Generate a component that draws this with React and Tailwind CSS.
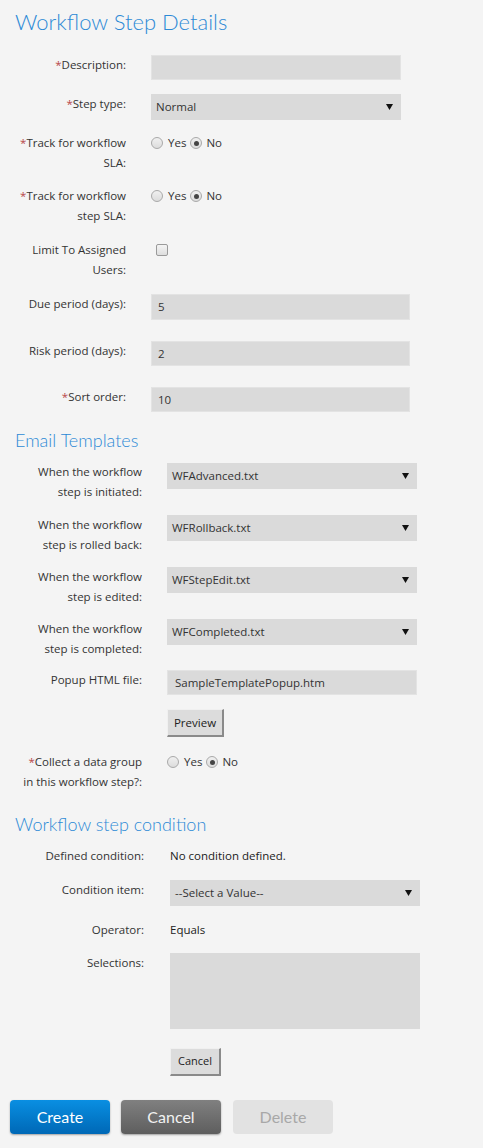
import React from 'react';

const labelFont = { fontFamily: '"Open Sans", "Noto Sans", sans-serif' };
const headFont = { fontFamily: 'Lato, sans-serif' };

function Req() {
  return <span className="text-[#b8474a]">*</span>;
}

function Arrow() {
  return (
    <svg width="7" height="6" viewBox="0 0 7 6" className="shrink-0">
      <path d="M0 0 L7 0 L3.5 6 Z" fill="#111" />
    </svg>
  );
}

function FakeSelect({ value, width = 'w-[250px]', className = '' }) {
  return (
    <div className={`${width} h-[26px] bg-[#dadada] flex items-center justify-between pl-[5px] pr-[8px] text-[11.5px] text-[#333] ${className}`}>
      <span>{value}</span>
      <Arrow />
    </div>
  );
}

function FakeInput({ value = '', width = 'w-[250px]', pad = 'pl-[6px]', h = 'h-[25px]' }) {
  return (
    <div className={`${width} ${h} ${pad} bg-[#dadada] border border-[#e3e3e3] flex items-center text-[11.5px] text-[#333]`}>
      {value}
    </div>
  );
}

function Radio({ checked }) {
  return (
    <span className="w-[12px] h-[12px] rounded-full border border-[#a9a9a9] bg-gradient-to-b from-[#f0f0f0] to-[#dcdcdc] flex items-center justify-center shrink-0">
      {checked && <span className="w-[5px] h-[5px] rounded-full bg-[#444]" />}
    </span>
  );
}

function YesNo() {
  return (
    <div className="h-[20px] flex items-center text-[11.5px] text-[#333]">
      <Radio />
      <span className="ml-[5px] mr-[4px]">Yes</span>
      <Radio checked />
      <span className="ml-[4px]">No</span>
    </div>
  );
}

function Row({ label, labelW, gap, mt, children }) {
  return (
    <div className={`flex items-start ${mt}`}>
      <div className={`${labelW} ${gap} text-right text-[11.5px] leading-[20px] text-[#333] shrink-0`}>{label}</div>
      <div>{children}</div>
    </div>
  );
}

function SmallButton({ children, className = '' }) {
  return (
    <div className={`h-[28px] bg-[#dcdcdc] border border-t-[#f0f0f0] border-l-[#f0f0f0] border-r-[#8a8a8a] border-b-[#8a8a8a] border-r-2 border-b-2 flex items-center justify-center text-[#222] ${className}`}>
      {children}
    </div>
  );
}

export default function App() {
  const s1 = { labelW: 'w-[126px]', gap: 'mr-[25px]' };
  const s2 = { labelW: 'w-[142px]', gap: 'mr-[25px]' };
  const s3 = { labelW: 'w-[144px]', gap: 'mr-[26px]' };

  return (
    <div className="min-h-[1148px] w-[483px] bg-[#f4f4f4] pt-[10px]" style={labelFont}>
      <h1 className="ml-[15px] h-[24px] text-[22px] leading-[24px] font-light text-[#2d8ad6]" style={headFont}>
        Workflow Step Details
      </h1>

      {/* Step details */}
      <Row {...s1} mt="mt-[21px]" label={<><Req />Description:</>}>
        <FakeInput />
      </Row>
      <Row {...s1} mt="mt-[14px]" label={<><Req />Step type:</>}>
        <FakeSelect value="Normal" />
      </Row>
      <Row {...s1} mt="mt-[13px]" label={<><Req />Track for workflow<br />SLA:</>}>
        <YesNo />
      </Row>
      <Row {...s1} mt="mt-[13px]" label={<><Req />Track for workflow<br />step SLA:</>}>
        <YesNo />
      </Row>
      <Row {...s1} mt="mt-[14px]" label={<>Limit To Assigned<br />Users:</>}>
        <div className="h-[20px] flex items-center pl-[5px]">
          <span className="w-[12px] h-[12px] rounded-[2px] border border-[#9a9a9a] bg-gradient-to-b from-[#f4f4f4] to-[#dedede]" />
        </div>
      </Row>
      <Row {...s1} mt="mt-[14px]" label="Due period (days):">
        <FakeInput value="5" width="w-[259px]" h="h-[26px]" />
      </Row>
      <Row {...s1} mt="mt-[21px]" label="Risk period (days):">
        <FakeInput value="2" width="w-[259px]" />
      </Row>
      <Row {...s1} mt="mt-[21px]" label={<><Req />Sort order:</>}>
        <FakeInput value="10" width="w-[259px]" />
      </Row>

      {/* Email templates */}
      <h2 className="ml-[15px] mt-[18px] h-[20px] text-[18px] leading-[20px] font-light text-[#2d8ad6]" style={headFont}>
        Email Templates
      </h2>
      <Row {...s2} mt="mt-[12px]" label={<>When the workflow<br />step is initiated:</>}>
        <FakeSelect value="WFAdvanced.txt" className="mt-[1px]" />
      </Row>
      <Row {...s2} mt="mt-[13px]" label={<>When the workflow<br />step is rolled back:</>}>
        <FakeSelect value="WFRollback.txt" />
      </Row>
      <Row {...s2} mt="mt-[12px]" label={<>When the workflow<br />step is edited:</>}>
        <FakeSelect value="WFStepEdit.txt" />
      </Row>
      <Row {...s2} mt="mt-[12px]" label={<>When the workflow<br />step is completed:</>}>
        <FakeSelect value="WFCompleted.txt" />
      </Row>
      <Row {...s2} mt="mt-[11px]" label="Popup HTML file:">
        <FakeInput value="SampleTemplatePopup.htm" pad="pl-[7px]" />
      </Row>
      <Row {...s2} mt="mt-[14px]" label="">
        <SmallButton className="w-[57px] text-[11.5px]">Preview</SmallButton>
      </Row>
      <Row {...s2} mt="mt-[15px]" label={<><Req />Collect a data group<br />in this workflow step?:</>}>
        <YesNo />
      </Row>

      {/* Condition */}
      <h2 className="ml-[15px] mt-[22px] h-[20px] text-[18px] leading-[20px] font-light text-[#2d8ad6]" style={headFont}>
        Workflow step condition
      </h2>
      <Row {...s3} mt="mt-[12px]" label="Defined condition:">
        <div className="text-[11.5px] leading-[20px] text-[#222]">No condition defined.</div>
      </Row>
      <Row {...s3} mt="mt-[14px]" label="Condition item:">
        <FakeSelect value="--Select a Value--" />
      </Row>
      <Row {...s3} mt="mt-[14px]" label="Operator:">
        <div className="text-[11.5px] leading-[20px] text-[#222]">Equals</div>
      </Row>
      <Row {...s3} mt="mt-[13px]" label="Selections:">
        <div className="w-[250px] h-[76px] bg-[#dadada]" />
      </Row>
      <Row {...s3} mt="mt-[19px]" label="">
        <SmallButton className="w-[51px] text-[11px]">Cancel</SmallButton>
      </Row>

      {/* Actions */}
      <div className="mt-[24px] ml-[10px] flex gap-[11px] pb-[14px]" style={headFont}>
        <button className="w-[100px] h-[34px] rounded-[4px] bg-gradient-to-b from-[#0a8fe2] to-[#0068b6] text-white text-[16px] shadow-[0_1px_2px_rgba(0,0,0,0.35)]">
          Create
        </button>
        <button className="w-[100px] h-[34px] rounded-[4px] bg-gradient-to-b from-[#808080] to-[#5e5e5e] text-[#f2f2f2] text-[16px] shadow-[0_1px_2px_rgba(0,0,0,0.35)]">
          Cancel
        </button>
        <button className="ml-[1px] w-[100px] h-[34px] rounded-[4px] bg-[#e2e2e2] text-[#a8a8a8] text-[16px]">
          Delete
        </button>
      </div>
    </div>
  );
}
